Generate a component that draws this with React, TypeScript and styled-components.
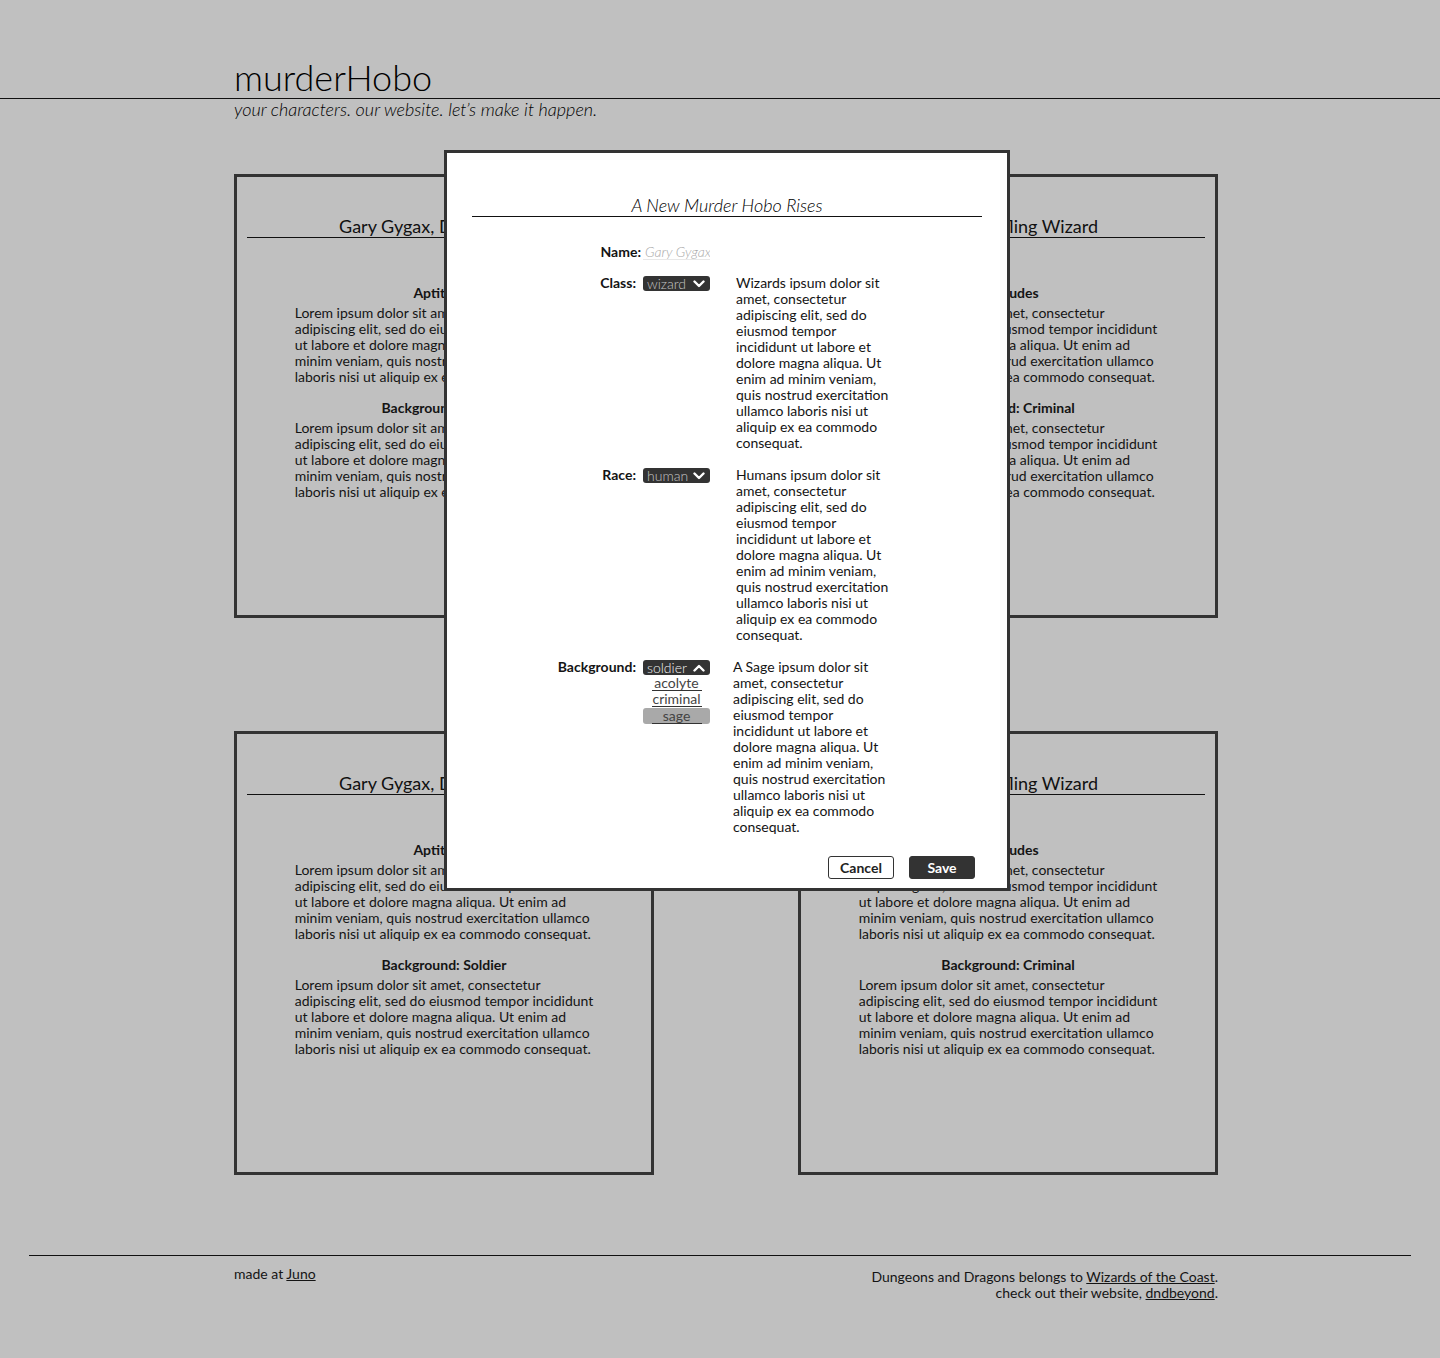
import React, { Fragment } from 'react';
import styled, { createGlobalStyle } from 'styled-components';

const GlobalStyle = createGlobalStyle`
  html, body {
    margin: 0;
    padding: 0;
    background: #c0c0c0;
  }

  body {
    min-height: 1358px;
    font-family: Lato, "Open Sans", sans-serif;
    font-size: 14px;
    line-height: 16px;
    color: #141414;
  }
`;

const LOREM = [
  'Lorem ipsum dolor sit amet, consectetur',
  'adipiscing elit, sed do eiusmod tempor incididunt',
  'ut labore et dolore magna aliqua. Ut enim ad',
  'minim veniam, quis nostrud exercitation ullamco',
  'laboris nisi ut aliquip ex ea commodo consequat.',
];

const DESC_TAIL = [
  'amet, consectetur',
  'adipiscing elit, sed do',
  'eiusmod tempor',
  'incididunt ut labore et',
  'dolore magna aliqua. Ut',
  'enim ad minim veniam,',
  'quis nostrud exercitation',
  'ullamco laboris nisi ut',
  'aliquip ex ea commodo',
  'consequat.',
];

const characters = [
  { name: 'Gary Gygax, Dwarf Fighter', background: 'Soldier' },
  { name: 'Jimmy, Halfling Wizard', background: 'Criminal' },
  { name: 'Gary Gygax, Dwarf Fighter', background: 'Soldier' },
  { name: 'Jimmy, Halfling Wizard', background: 'Criminal' },
];

const Lines = ({ lines }: { lines: string[] }) => (
  <>
    {lines.map((line, i) => (
      <Fragment key={i}>
        {i > 0 && <br />}
        {line}
      </Fragment>
    ))}
  </>
);

const Chevron = ({ up }: { up?: boolean }) => (
  <svg width="12" height="8" viewBox="0 0 12 8">
    <polyline
      points={up ? '1.5,6.5 6,2 10.5,6.5' : '1.5,1.5 6,6 10.5,1.5'}
      fill="none"
      stroke="#fff"
      strokeWidth="2.4"
      strokeLinecap="round"
      strokeLinejoin="round"
    />
  </svg>
);

const App = () => (
  <Page>
    <GlobalStyle />
    <Header>
      <Logo>murderHobo</Logo>
      <Tagline>your characters. our website. let’s make it happen.</Tagline>
    </Header>

    <CardGrid>
      {characters.map((c, i) => (
        <Card key={i}>
          <CardTitle>{c.name}</CardTitle>
          <SectionTitle>Aptitudes</SectionTitle>
          <Paragraph><Lines lines={LOREM} /></Paragraph>
          <SectionTitle>Background: {c.background}</SectionTitle>
          <Paragraph><Lines lines={LOREM} /></Paragraph>
        </Card>
      ))}
    </CardGrid>

    <Footer>
      <FooterInner>
        <div>made at <Link>Juno</Link></div>
        <Credits>
          Dungeons and Dragons belongs to <Link>Wizards of the Coast</Link>.
          <br />
          check out their website, <Link>dndbeyond</Link>.
        </Credits>
      </FooterInner>
    </Footer>

    <Modal>
      <ModalTitle>A New Murder Hobo Rises</ModalTitle>
      <Form>
        <Label name>Name:</Label>
        <NameInput placeholder="Gary Gygax" />
        <span />

        <Label>Class:</Label>
        <SelectCol>
          <Select>wizard<Chevron /></Select>
        </SelectCol>
        <Description><Lines lines={['Wizards ipsum dolor sit', ...DESC_TAIL]} /></Description>

        <Label>Race:</Label>
        <SelectCol>
          <Select>human<Chevron /></Select>
        </SelectCol>
        <Description><Lines lines={['Humans ipsum dolor sit', ...DESC_TAIL]} /></Description>

        <Label>Background:</Label>
        <SelectCol>
          <Select open>soldier<Chevron up /></Select>
          <Option><OptionText>acolyte</OptionText></Option>
          <Option><OptionText>criminal</OptionText></Option>
          <Option selected><OptionText>sage</OptionText></Option>
        </SelectCol>
        <Description shift><Lines lines={['A Sage ipsum dolor sit', ...DESC_TAIL]} /></Description>
      </Form>
      <Actions>
        <CancelButton>Cancel</CancelButton>
        <SaveButton>Save</SaveButton>
      </Actions>
    </Modal>
  </Page>
);

const Page = styled.div`
  position: relative;
  min-height: 1358px;
`;

const Header = styled.header`
  padding-top: 56px;
`;

const Logo = styled.h1`
  margin: 0;
  padding-left: 234px;
  font-size: 36px;
  line-height: 42px;
  font-weight: 300;
  color: #000;
  border-bottom: 1px solid #111;
`;

const Tagline = styled.p`
  margin: 0;
  padding-left: 234px;
  font-size: 18px;
  line-height: 21px;
  font-style: italic;
  font-weight: 300;
  color: #000;
`;

const CardGrid = styled.main`
  margin: 54px 0 0 234px;
  display: grid;
  grid-template-columns: 420px 420px;
  column-gap: 144px;
  row-gap: 113px;
`;

const Card = styled.section`
  box-sizing: border-box;
  height: 444px;
  padding: 10px;
  border: 3px solid #333;
`;

const CardTitle = styled.h2`
  margin: 28px 0 0;
  font-size: 18px;
  line-height: 22px;
  font-weight: 400;
  color: #111;
  text-align: center;
  border-bottom: 1px solid #111;
`;

const SectionTitle = styled.h3`
  margin: 47px 0 4px;
  font-size: 14px;
  line-height: 16px;
  font-weight: 700;
  text-align: center;

  & + p + & {
    margin-top: 15px;
  }
`;

const Paragraph = styled.p`
  width: fit-content;
  margin: 0 auto;
  white-space: nowrap;
`;

const Footer = styled.footer`
  margin: 80px 29px 0;
  border-top: 1px solid #111;
`;

const FooterInner = styled.div`
  width: 984px;
  margin-left: 205px;
  padding-top: 10px;
  display: flex;
  justify-content: space-between;
  align-items: flex-start;
`;

const Credits = styled.div`
  margin-top: 3px;
  text-align: right;
`;

const Link = styled.a`
  color: inherit;
  text-decoration: underline;
`;

const Modal = styled.div`
  position: absolute;
  top: 150px;
  left: 444px;
  box-sizing: border-box;
  width: 566px;
  padding: 42px 25px 9px;
  background: #fff;
  border: 3px solid #333;
`;

const ModalTitle = styled.h2`
  margin: 0;
  font-size: 18px;
  line-height: 21px;
  font-weight: 300;
  font-style: italic;
  color: #000;
  text-align: center;
  border-bottom: 1px solid #111;
`;

const Form = styled.div`
  margin-top: 27px;
  display: grid;
  grid-template-columns: 171px 67px 180px;
  row-gap: 16px;

  & > :nth-child(-n + 3) {
    margin-bottom: -1px;
  }
`;

const Label = styled.label<{ name?: boolean }>`
  padding-right: ${(p) => (p.name ? '2px' : '7px')};
  text-align: right;
  font-weight: 700;
`;

const NameInput = styled.input`
  box-sizing: border-box;
  width: 67px;
  height: 16px;
  padding: 0 0 0 2px;
  border: 0;
  border-bottom: 1px solid #e8e8e8;
  font: inherit;
  outline: none;

  &::placeholder {
    color: #a8a8a8;
    opacity: 1;
    font-style: italic;
    font-weight: 300;
  }
`;

const SelectCol = styled.div`
  display: flex;
  flex-direction: column;
`;

const Select = styled.div<{ open?: boolean }>`
  box-sizing: border-box;
  height: 15px;
  margin-top: 1px;
  padding: 0 5px 0 4px;
  display: flex;
  align-items: center;
  justify-content: space-between;
  background: #333;
  border-radius: 3px;
  color: ${(p) => (p.open ? '#f2f2f2' : '#c4c4c4')};
  font-weight: 300;
  line-height: 15px;
`;

const Option = styled.div<{ selected?: boolean }>`
  height: 16px;
  margin-top: ${(p) => (p.selected ? '1px' : '0')};
  display: flex;
  justify-content: center;
  background: ${(p) => (p.selected ? '#a9a9a9' : 'transparent')};
  border-radius: 3px;
  color: #444;
`;

const OptionText = styled.span`
  box-sizing: border-box;
  width: 50px;
  height: 16px;
  line-height: 15px;
  text-align: center;
  border-bottom: 1px solid #333;
`;

const Description = styled.p<{ shift?: boolean }>`
  margin: 0;
  padding-left: ${(p) => (p.shift ? '23px' : '26px')};
  white-space: nowrap;
`;

const Actions = styled.div`
  margin-top: 21px;
  padding-right: 7px;
  display: flex;
  justify-content: flex-end;
  gap: 15px;
`;

const BaseButton = styled.button`
  box-sizing: border-box;
  width: 66px;
  height: 23px;
  padding: 0;
  border: 1px solid #333;
  border-radius: 3px;
  font-family: inherit;
  font-size: 14px;
  font-weight: 700;
`;

const CancelButton = styled(BaseButton)`
  background: #fff;
  color: #222;
`;

const SaveButton = styled(BaseButton)`
  background: #333;
  color: #fff;
`;

export default App;
